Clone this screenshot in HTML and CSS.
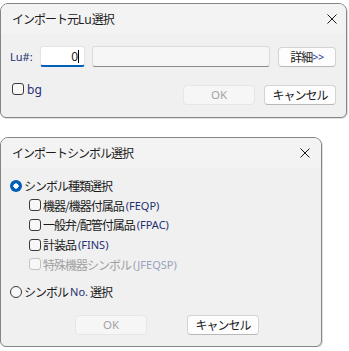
FILE: index.html
```html
<!DOCTYPE html>
<html lang="ja">
<head>
<meta charset="utf-8">
<link rel="stylesheet" href="styles.css">
</head>
<body>
<div class="page">
  <div class="dlg dlg-lu">
    <div class="titlebar">
      <span class="title">インポート元<span class="lat">Lu</span>選択</span>
      <svg class="close" width="10" height="10" viewBox="0 0 10 10"><path d="M0.5 0.5 L9.5 9.5 M9.5 0.5 L0.5 9.5" stroke="#1b1b1b" stroke-width="1"/></svg>
    </div>
    <div class="body">
      <div class="row1">
        <span class="lulabel lat">Lu#:</span>
        <div class="edit focus"><span class="lat">0</span><span class="caret"></span></div>
        <div class="edit ro"></div>
        <div class="btn btn-detail">詳細<span class="lat">&gt;&gt;</span></div>
      </div>
      <div class="row2">
        <label class="check"><span class="box"></span><span class="lat">bg</span></label>
        <div class="btns">
          <div class="btn btn-wide disabled"><span class="lat">OK</span></div>
          <div class="btn btn-wide">キャンセル</div>
        </div>
      </div>
    </div>
  </div>

  <div class="dlg dlg-sym">
    <div class="titlebar">
      <span class="title">インポートシンボル選択</span>
      <svg class="close" width="10" height="10" viewBox="0 0 10 10"><path d="M0.5 0.5 L9.5 9.5 M9.5 0.5 L0.5 9.5" stroke="#1b1b1b" stroke-width="1"/></svg>
    </div>
    <div class="body">
      <div class="opt"><span class="radio on"></span>シンボル種類選択</div>
      <div class="sub">
        <div class="opt"><span class="box"></span>機器/機器付属品<span class="lat">(FEQP)</span></div>
        <div class="opt"><span class="box"></span>一般弁/配管付属品<span class="lat">(FPAC)</span></div>
        <div class="opt"><span class="box"></span>計装品<span class="lat">(FINS)</span></div>
        <div class="opt dis"><span class="box"></span>特殊機器シンボル<span class="lat">(JFEQSP)</span></div>
      </div>
      <div class="opt opt-no"><span class="radio"></span>シンボル<span class="lat">No.</span>選択</div>
      <div class="btns2">
        <div class="btn btn-wide disabled"><span class="lat">OK</span></div>
        <div class="btn btn-wide">キャンセル</div>
      </div>
    </div>
  </div>
</div>
</body>
</html>
```

FILE: styles.css
```css
* { box-sizing: border-box; }
html, body { margin: 0; padding: 0; background: #ffffff; }
body {
  font-family: "Noto Sans CJK JP", "Noto Sans", sans-serif;
  font-size: 12px;
  letter-spacing: -1px;
  color: #1a1a1a;
}
.lat {
  font-family: "Noto Sans", "Noto Sans CJK JP", sans-serif;
  font-size: 11px;
  letter-spacing: 0;
  color: #1f2f72;
}
.page { padding-top: 3px; display: flex; flex-direction: column; align-items: flex-start; }

.dlg {
  background: #f0f0f0;
  border: 1px solid #858585;
  border-radius: 8px 8px 6px 6px;
  box-shadow: 1px 1px 0 rgba(0,0,0,0.12);
  overflow: hidden;
}
.dlg-lu { width: 347px; height: 115px; }
.dlg-sym { width: 322px; height: 210px; margin-top: 19px; }

.titlebar {
  height: 30px;
  background: #f3f3f3;
  display: flex;
  align-items: center;
  justify-content: space-between;
  padding-left: 11px;
}
.dlg-lu .titlebar { padding-right: 9px; }
.dlg-sym .titlebar { padding-right: 11px; }
.title { line-height: 1; color: #1a1a1a; }
.title .lat { font-size: 12px; color: #1a1a1a; }
.close { display: block; }

/* dialog 1 */
.dlg-lu .body { padding: 12px 10px 0 9px; }
.row1 { display: flex; align-items: center; height: 21px; }
.lulabel { width: 30px; }
.edit { height: 21px; border-radius: 3px; }
.edit.focus {
  width: 45px;
  background: #ffffff;
  border: 1px solid #e3e3e3;
  border-bottom: 2px solid #005fb8;
  display: flex; align-items: center; justify-content: flex-end;
  padding-right: 5px;
}
.edit.focus .lat { color: #1a1a1a; font-size: 12px; }
.caret { width: 1px; height: 13px; background: #000; margin-left: 0; }
.edit.ro {
  width: 178px;
  margin-left: 7px;
  background: #f6f6f6;
  border: 1px solid #dcdcdc;
  border-bottom-color: #8a8a8a;
}
.btn {
  height: 20px;
  background: #fdfdfd;
  border: 1px solid #d3d3d3;
  border-bottom-color: #b8b8b8;
  border-radius: 4px;
  display: flex; align-items: center; justify-content: center;
  color: #1a1a1a;
  line-height: 1;
}
.btn-detail { width: 58px; margin-left: 8px; }
.btn-detail .lat { color: #2a3a9a; font-size: 11px; letter-spacing: -0.5px; }
.btn-wide { width: 72px; }
.btn.disabled { background: #f6f6f6; border-color: #e6e6e6; }
.btn.disabled .lat { color: #a3a3a3; font-size: 11.5px; }

.row2 { display: flex; justify-content: space-between; align-items: flex-start; margin-top: 16px; }
.check { display: flex; align-items: center; gap: 3px; padding-left: 2px; height: 12px; }
.check .lat { color: #1f2f72; font-size: 12px; }
.btns { display: flex; gap: 9px; margin-top: 2px; }

.box {
  width: 12px; height: 12px;
  border: 1px solid #3a3a3a;
  border-radius: 3px;
  background: #f7f7f7;
  flex: none;
}
.radio {
  width: 12px; height: 12px;
  border: 1px solid #3a3a3a;
  border-radius: 50%;
  background: #f7f7f7;
  flex: none;
}
.radio.on {
  border: none;
  background: radial-gradient(circle, #ffffff 0 2.4px, #005fb8 2.9px);
}

/* dialog 2 */
.dlg-sym .body { padding: 8px 0 0 9px; }
.opt { display: flex; align-items: center; gap: 2px; height: 19.6px; white-space: nowrap; }
.sub { padding-left: 19px; }
.sub .opt { gap: 2px; }
.opt.dis { color: #a0a0a0; }
.opt.dis .box { border-color: #c2c2c2; }
.opt.dis .lat { color: #9aa0b8; }
.opt-no { margin-top: 8px; }
.btns2 { display: flex; gap: 40px; padding-left: 65px; margin-top: 13px; }
```
